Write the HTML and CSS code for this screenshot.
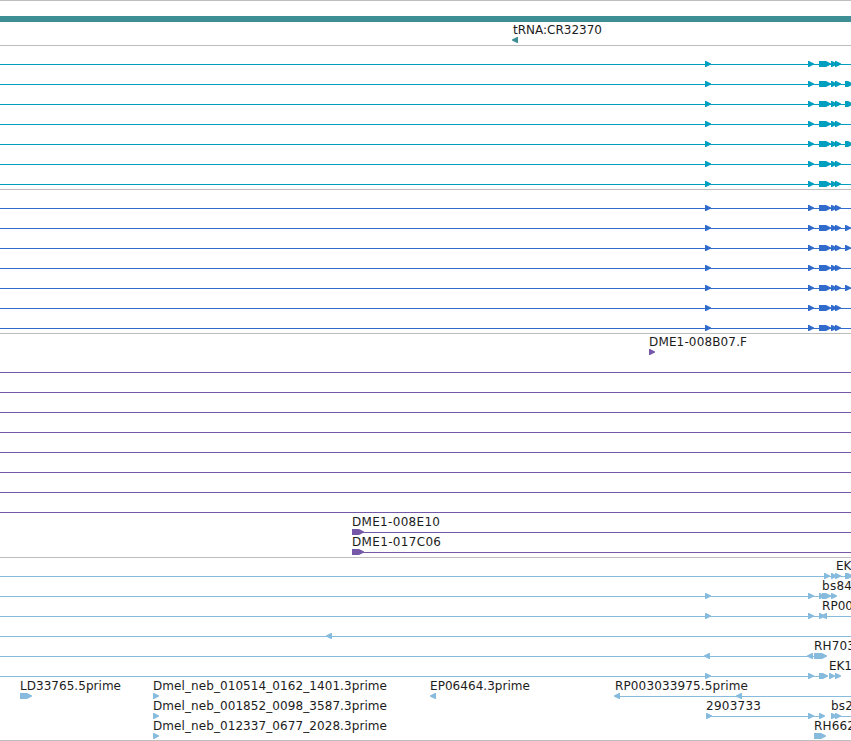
FILE: index.html
```html
<!DOCTYPE html>
<html>
<head>
    <meta charset="utf-8">
    <title>Genome tracks</title>
    <link rel="stylesheet" href="styles.css">
</head>
<body>
    <div class="browser">
        <div class="track genes" id="genes"></div>
        <div class="track transcripts" id="transcripts"></div>
        <div class="track cds" id="cds"></div>
        <div class="track bac" id="bac"></div>
        <div class="track est" id="est"></div>
    </div>
    <script src="script.js"></script>
</body>
</html>
```
FILE: styles.css
```css
body {
    margin: 0;
    background-color: #fff;
    font-family: "DejaVu Sans", sans-serif;
    overflow: hidden;
}

.browser {
    width: 851px;
    border-top: 1px solid #bebebe;
}

.track {
    padding-bottom: 3px;
    border-bottom: 1px solid #bebebe;
}

.row {
    display: block;
    width: 851px;
    height: 20px;
    fill: currentColor;
    shape-rendering: crispEdges;
}

.row .arrow {
    shape-rendering: auto;
}

.row text {
    fill: #1c1c1c;
    font-size: 12px;
}

.genes {
    color: #3d8e95;
}

.genes .row + .row {
    margin-top: 1px;
}

.transcripts {
    color: #009fbf;
}

.cds {
    color: #316ccd;
}

.bac {
    color: #7658a8;
}

.est {
    color: #87bbde;
    padding-bottom: 2px;
}
```
FILE: script.js
```js
var WIDTH = 851;
var HEAD = 6;

// horizontal intron line
function line(from, to) {
    return '<rect x="' + from + '" y="18" width="' + (to - from) + '" height="1"/>';
}

// exon pointing right, the head takes the last 6px
function right(from, to) {
    to = to || from + HEAD;
    var neck = to - HEAD + 1;
    return '<polygon class="arrow" points="' + from + ',15 ' + neck + ',15 ' + to + ',17.5 ' + to + ',18.5 ' + neck + ',21 ' + from + ',21"/>';
}

function left(from) {
    var to = from + HEAD;
    return '<polygon class="arrow" points="' + from + ',17.5 ' + (to - 1) + ',15 ' + to + ',15 ' + to + ',21 ' + (to - 1) + ',21 ' + from + ',18.5"/>';
}

function label(x, text, width) {
    var fit = width ? ' textLength="' + width + '"' : '';
    return '<text x="' + x + '" y="12"' + fit + '>' + text + '</text>';
}

function addRow(id, parts) {
    document.getElementById(id).insertAdjacentHTML('beforeend',
        '<svg class="row" overflow="visible">' + parts.join('') + '</svg>');
}

var full = line(0, WIDTH);
var exons = [full, right(705), right(808), right(819, 831), right(831), right(835)];

addRow('genes', ['<rect x="0" y="15" width="851" height="6"/>']);
addRow('genes', [label(513, 'tRNA:CR32370', 89), left(512)]);

[0, 1, 1, 0, 1, 0, 0].forEach(function (last) {
    addRow('transcripts', exons.concat(last ? right(845, 853) : ''));
});

[0, 1, 1, 0, 1, 0, 0].forEach(function (last) {
    addRow('cds', exons.concat(last ? right(845) : ''));
});

addRow('bac', [label(649, 'DME1-008B07.F', 98), right(649)]);
for (var i = 0; i < 8; i++) {
    addRow('bac', [full]);
}
addRow('bac', [label(352, 'DME1-008E10', 88), line(352, WIDTH), right(352, 364)]);
addRow('bac', [label(352, 'DME1-017C06', 89), line(352, WIDTH), right(352, 364)]);

addRow('est', [label(836, 'EK'), full, right(824), right(831), right(835), right(845, 853)]);
addRow('est', [label(822, 'bs84', 30), line(0, 836), right(705), right(808), right(819), right(822, 831), right(831)]);
addRow('est', [label(822, 'RP00', 31), full, right(705), right(808), right(819), left(821)]);
addRow('est', [full, left(326)]);
addRow('est', [label(814, 'RH703', 41), line(0, 826), left(704), left(807), right(814, 827)]);
addRow('est', [label(829, 'EK1', 23), line(0, 827), right(705), right(808), right(819, 828), right(829), right(835)]);
addRow('est', [
    label(20, 'LD33765.5prime', 101), right(20, 32),
    label(153, 'Dmel_neb_010514_0162_1401.3prime', 234), right(153),
    label(430, 'EP06464.3prime', 100), left(430),
    label(615, 'RP003033975.5prime', 133), line(615, WIDTH), left(614), left(736)
]);
addRow('est', [
    label(153, 'Dmel_neb_001852_0098_3587.3prime', 234), right(153),
    label(706, '2903733', 55), line(706, 824), right(706), right(808), right(819),
    label(831, 'bs2', 22), line(831, WIDTH), right(831), right(835)
]);
addRow('est', [
    label(153, 'Dmel_neb_012337_0677_2028.3prime', 234), right(153),
    label(814, 'RH662', 41), right(814, 826)
]);
```
